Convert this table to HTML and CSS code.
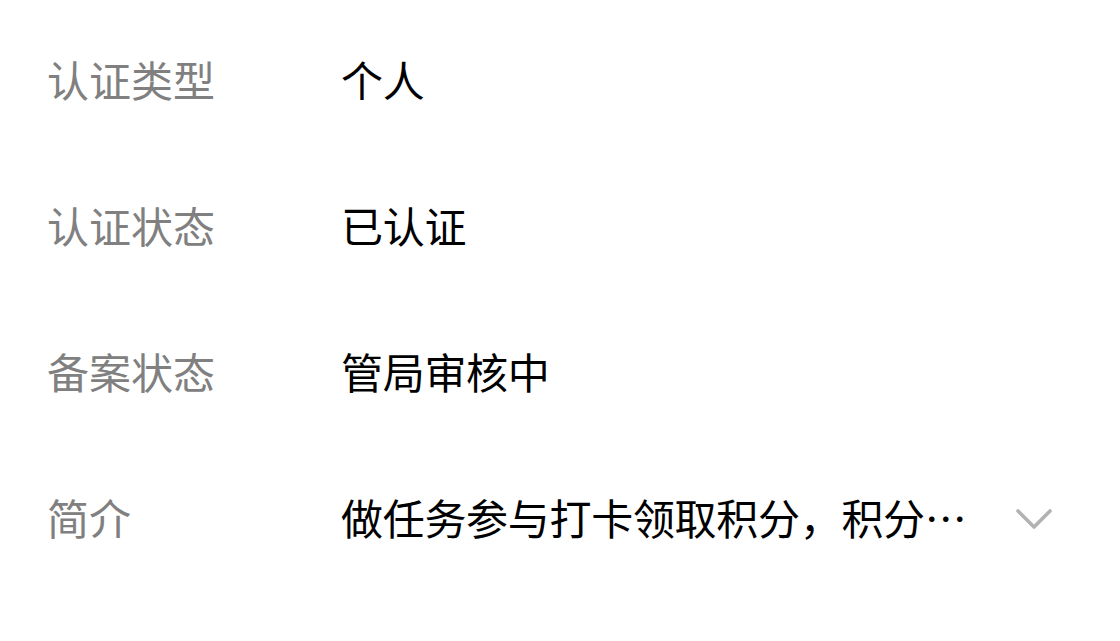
FILE: index.html
```html
<!DOCTYPE html>
<html lang="zh-CN">
<head>
<meta charset="utf-8">
<link rel="stylesheet" href="styles.css">
</head>
<body>
<div class="info">
  <div class="row">
    <div class="label">认证类型</div>
    <div class="value">个人</div>
  </div>
  <div class="row">
    <div class="label">认证状态</div>
    <div class="value">已认证</div>
  </div>
  <div class="row">
    <div class="label">备案状态</div>
    <div class="value">管局审核中</div>
  </div>
  <div class="row">
    <div class="label">简介</div>
    <div class="value">做任务参与打卡领取积分，积分…</div>
    <svg class="chevron" width="40" height="24" viewBox="0 0 40 24">
      <polyline points="3,4 19,20 35,4" fill="none" stroke="#b2b2b2" stroke-width="3.6" stroke-linecap="round" stroke-linejoin="round"/>
    </svg>
  </div>
</div>
</body>
</html>
```

FILE: styles.css
```css
html, body {
  margin: 0;
  padding: 0;
  background: #ffffff;
}
body {
  font-family: "Noto Sans CJK SC", "Noto Sans", sans-serif;
  font-size: 42px;
}
.info {
  display: flex;
  flex-direction: column;
  padding-top: 6px;
}
.row {
  display: flex;
  align-items: center;
  height: 146px;
  padding-left: 47px;
  padding-right: 65px;
}
.label {
  width: 294px;
  flex: none;
  color: #808080;
  line-height: 50px;
}
.value {
  color: #000000;
  line-height: 50px;
  white-space: nowrap;
  letter-spacing: -0.3px;
}
.chevron {
  flex: none;
  margin-left: auto;
  margin-top: 4px;
}
```
